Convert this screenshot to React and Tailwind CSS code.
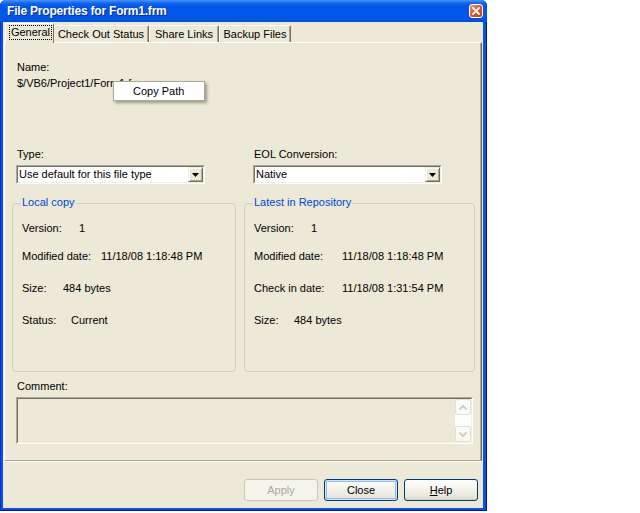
import React from "react";

const Arrow = () => (
  <svg width="7" height="4" viewBox="0 0 7 4">
    <path d="M0 0h7L3.5 4z" fill="#000" />
  </svg>
);

const Combo = ({ text }) => (
  <div className="mt-[4px] -ml-px flex h-[19px] w-[189px] border border-t-[#aca899] border-l-[#aca899] border-r-white border-b-white">
    <div className="flex flex-1 items-center border border-t-[#716f64] border-l-[#716f64] border-r-[#f1efe2] border-b-[#f1efe2] bg-white">
      <span className="flex-1 pl-[1px]">{text}</span>
      <div className="flex h-full w-[15px] items-center justify-center border border-t-[#f1efe2] border-l-[#f1efe2] border-r-[#716f64] border-b-[#716f64] bg-[#ece9d8] shadow-[inset_1px_1px_0_#fff,inset_-1px_-1px_0_#aca899]">
        <Arrow />
      </div>
    </div>
  </div>
);

const Row = ({ label, value, lw, mt }) => (
  <div className={`flex leading-[13px] ${mt}`}>
    <span className={lw}>{label}</span>
    <span>{value}</span>
  </div>
);

const Group = ({ title, width, rows }) => (
  <div className={`pt-[6px] ${width}`}>
    <div className="relative h-[169px] rounded-[4px] border border-[#d0d0bf] pl-[9px] pt-[18px]">
      <span className="absolute left-[8px] -top-[8px] bg-[#ece9d8] px-[1px] leading-[13px] text-[#0046d5]">
        {title}
      </span>
      {rows.map((r) => (
        <Row key={r.label} {...r} />
      ))}
    </div>
  </div>
);

const ScrollBtn = ({ down }) => (
  <div className="flex h-[16px] w-[16px] items-center justify-center rounded-[2px] border border-[#e3e1d6] bg-[#f9f9f5]">
    <svg width="8" height="5" viewBox="0 0 8 5">
      <path
        d={down ? "M0.5 0.5L4 4L7.5 0.5" : "M0.5 4.5L4 1L7.5 4.5"}
        fill="none"
        stroke="#c9c7ba"
        strokeWidth="1.6"
      />
    </svg>
  </div>
);

const XpButton = ({ children, disabled, focused }) => {
  if (disabled) {
    return (
      <div className="flex h-[22px] w-[74px] items-center justify-center rounded-[3px] border border-[#c9c7ba] bg-[#f5f4ea] text-[#aca899]">
        {children}
      </div>
    );
  }
  return (
    <div
      className={`flex h-[22px] w-[74px] items-center justify-center rounded-[3px] border border-[#003c74] bg-[linear-gradient(180deg,#ffffff_0%,#f4f3ee_45%,#e8e5da_85%,#d6d0c5_100%)] ${
        focused ? "shadow-[inset_0_0_0_1px_#cee7ff,inset_0_0_0_2px_#98b8ea]" : ""
      }`}
    >
      {children}
    </div>
  );
};

export default function App() {
  const leftRows = [
    { label: "Version:", value: "1", lw: "w-[57px]", mt: "" },
    { label: "Modified date:", value: "11/18/08 1:18:48 PM", lw: "w-[79px]", mt: "mt-[15px]" },
    { label: "Size:", value: "484 bytes", lw: "w-[41px]", mt: "mt-[19px]" },
    { label: "Status:", value: "Current", lw: "w-[49px]", mt: "mt-[19px]" },
  ];
  const rightRows = [
    { label: "Version:", value: "1", lw: "w-[57px]", mt: "" },
    { label: "Modified date:", value: "11/18/08 1:18:48 PM", lw: "w-[88px]", mt: "mt-[15px]" },
    { label: "Check in date:", value: "11/18/08 1:31:54 PM", lw: "w-[88px]", mt: "mt-[19px]" },
    { label: "Size:", value: "484 bytes", lw: "w-[40px]", mt: "mt-[19px]" },
  ];

  return (
    <div className="h-[513px] w-[640px] bg-white font-['Liberation_Sans',Arial,sans-serif] text-[11px] leading-[13px] text-black">
      <div className="flex h-[511px] w-[487px] flex-col rounded-t-[6px] bg-[#0a52df] shadow-[inset_1px_0_0_#0831d9,inset_-1px_0_0_#00138c,inset_0_-1px_0_#00138c]">
        {/* Title bar */}
        <div className="flex h-[22px] shrink-0 items-center justify-between rounded-t-[6px] bg-[linear-gradient(180deg,#4a96fb_0%,#1465ee_14%,#0055e5_32%,#0058ea_72%,#004fd9_100%)] pl-[7px] pr-[4px]">
          <span className="text-[12px] font-bold tracking-[-0.2px] text-white [text-shadow:1px_1px_0_#0a2a99]">
            File Properties for Form1.frm
          </span>
          <div className="flex h-[14px] w-[14px] items-center justify-center rounded-[3px] border border-white bg-[linear-gradient(135deg,#ef9a7a_0%,#df5a34_45%,#c2381a_100%)]">
            <svg width="8" height="8" viewBox="0 0 8 8">
              <path d="M1 1L7 7M7 1L1 7" stroke="#fff" strokeWidth="1.8" strokeLinecap="square" />
            </svg>
          </div>
        </div>

        {/* Client area */}
        <div className="ml-[3px] mr-[4px] flex flex-1 flex-col bg-[#ece9d8]">
          {/* Tabs */}
          <div className="relative z-10 flex h-[21px] items-end pl-[2px]">
            <div className="flex h-[20px] w-[49px] justify-center rounded-t-[2px] border-t border-l border-r border-t-white border-l-white border-r-[#716f64] bg-[#ece9d8] pl-[2px] pt-[1px]">
              <span className="h-[15px] border border-dotted border-black px-[1px]">General</span>
            </div>
            <div className="mb-px flex h-[17px] w-[95px] items-center justify-center rounded-t-[2px] border-t border-r border-t-white border-r-[#716f64] shadow-[inset_-1px_0_0_#aca899]">
              Check Out Status
            </div>
            <div className="mb-px flex h-[17px] w-[70px] items-center justify-center rounded-t-[2px] border-t border-l border-r border-t-white border-l-white border-r-[#716f64] shadow-[inset_-1px_0_0_#aca899]">
              Share Links
            </div>
            <div className="mb-px flex h-[17px] w-[72px] items-center justify-center rounded-t-[2px] border-t border-l border-r border-t-white border-l-white border-r-[#716f64] shadow-[inset_-1px_0_0_#aca899]">
              Backup Files
            </div>
          </div>

          {/* Tab page */}
          <div className="mx-px -mt-px flex h-[419px] flex-col border border-t-white border-l-white border-r-[#716f64] border-b-[#aca899] pl-[7px] pr-[6px] shadow-[inset_-1px_0_0_#aca899]">
            <div className="ml-[5px] mt-[18px]">Name:</div>
            <div className="relative ml-[5px] mt-[3px]">
              $/VB6/Project1/Form1.frm
              <div className="absolute left-[96px] top-[4px] z-20 flex h-[20px] w-[92px] items-center border border-[#aca899] bg-white pl-[19px] shadow-[2px_2px_3px_rgba(0,0,0,0.35)]">
                Copy Path
              </div>
            </div>

            <div className="mt-[58px] flex">
              <div className="w-[232px] pl-[5px]">
                <div>Type:</div>
                <Combo text="Use default for this file type" />
              </div>
              <div className="pl-[10px]">
                <div>EOL Conversion:</div>
                <Combo text="Native" />
              </div>
            </div>

            <div className="mt-[13px] flex gap-[8px]">
              <Group title="Local copy" width="w-[224px]" rows={leftRows} />
              <Group title="Latest in Repository" width="w-[231px]" rows={rightRows} />
            </div>

            <div className="ml-[5px] mt-[8px]">Comment:</div>
            <div className="ml-[4px] mt-[4px] flex h-[47px] w-[457px] border border-t-[#aca899] border-l-[#aca899] border-r-white border-b-white">
              <div className="flex flex-1 justify-end border border-t-[#716f64] border-l-[#716f64] border-r-[#f1efe2] border-b-[#f1efe2] bg-[#ece9d8]">
                <div className="flex w-[16px] flex-col bg-[#fdfdfa]">
                  <ScrollBtn />
                  <div className="flex-1" />
                  <ScrollBtn down />
                </div>
              </div>
            </div>
          </div>

          {/* Buttons */}
          <div className="flex flex-1 justify-end gap-[6px] border-t border-t-white pr-[5px] pt-[17px]">
            <XpButton disabled>Apply</XpButton>
            <XpButton focused>Close</XpButton>
            <XpButton>
              <span>
                <span className="underline">H</span>elp
              </span>
            </XpButton>
          </div>
        </div>
        <div className="h-[3px] shrink-0" />
      </div>
    </div>
  );
}
